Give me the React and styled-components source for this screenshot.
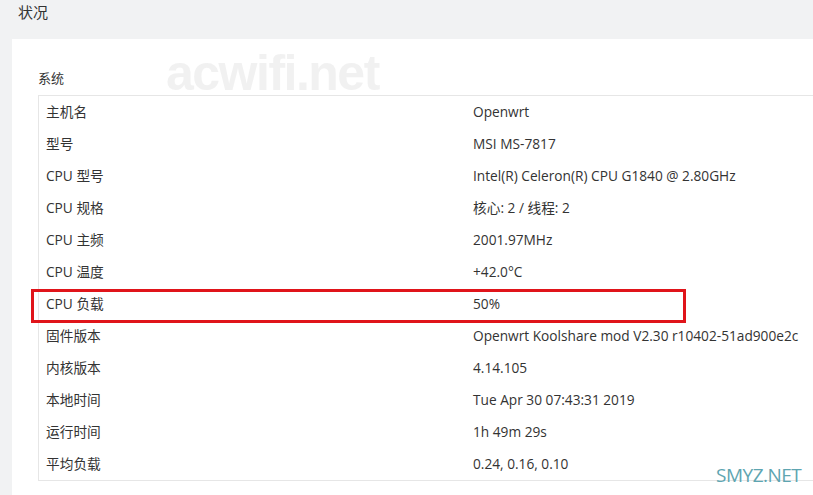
import React from 'react'
import styled, {createGlobalStyle} from 'styled-components'

const GlobalStyle = createGlobalStyle`
    html, body {
        margin: 0;
        padding: 0;
        background: #f1f2f3;
        overflow: hidden;
    }
    body {
        font-family: "Open Sans", "Noto Sans CJK SC", sans-serif;
        color: #333;
    }
`

const Page = styled.div`
    position: relative;
    width: 813px;
    height: 495px;
    overflow: hidden;
`

const Title = styled.h2`
    margin: 0;
    padding: 2px 0 0 18px;
    height: 37px;
    font-size: 15px;
    font-weight: normal;
    line-height: 20px;
    color: #333;
`

const Card = styled.div`
    margin-left: 12px;
    width: 830px;
    background: #fff;
    padding: 28px 0 16px 26px;
    box-sizing: border-box;
`

const Legend = styled.div`
    font-size: 13px;
    line-height: 22px;
    height: 28px;
    color: #333;
`

const Table = styled.div`
    border: 1px solid #e6e6e6;
    border-right: none;
`

const Row = styled.div`
    position: relative;
    display: grid;
    grid-template-columns: 434px 1fr;
    height: 32px;
    align-items: center;
    font-size: 13.7px;
    line-height: 18px;
    color: #333;
    padding-bottom: 1px;
    box-sizing: border-box;
`

const Label = styled.div`
    padding-left: 7px;
`

const Value = styled.div`
    white-space: nowrap;
`

const Highlight = styled.div`
    position: absolute;
    left: -8px;
    top: 1px;
    width: 655px;
    height: 34px;
    border: 3px solid #e0141a;
    box-sizing: border-box;
    pointer-events: none;
`

const Watermark = styled.div`
    position: absolute;
    left: 166px;
    top: 44px;
    font-family: "Liberation Sans", Arial, sans-serif;
    font-weight: bold;
    font-size: 50px;
    letter-spacing: -1.5px;
    color: rgba(200, 200, 200, 0.25);
    pointer-events: none;
`

const Stamp = styled.div`
    position: absolute;
    left: 716px;
    top: 462px;
    font-family: "Open Sans", "Noto Sans", sans-serif;
    font-size: 19px;
    letter-spacing: -0.5px;
    color: #5ea5b1;
`

const rows = [
    ['主机名', 'Openwrt'],
    ['型号', 'MSI MS-7817'],
    ['CPU 型号', 'Intel(R) Celeron(R) CPU G1840 @ 2.80GHz'],
    ['CPU 规格', '核心: 2 / 线程: 2'],
    ['CPU 主频', '2001.97MHz'],
    ['CPU 温度', '+42.0°C'],
    ['CPU 负载', '50%', true],
    ['固件版本', 'Openwrt Koolshare mod V2.30 r10402-51ad900e2c'],
    ['内核版本', '4.14.105'],
    ['本地时间', 'Tue Apr 30 07:43:31 2019'],
    ['运行时间', '1h 49m 29s'],
    ['平均负载', '0.24, 0.16, 0.10'],
]

function App() {
    return (
        <Page>
            <GlobalStyle/>
            <Title>状况</Title>
            <Card>
                <Legend>系统</Legend>
                <Table>
                    {rows.map(([label, value, marked]) =>
                        <Row key={label}>
                            <Label>{label}</Label>
                            <Value>{value}</Value>
                            {marked && <Highlight/>}
                        </Row>
                    )}
                </Table>
            </Card>
            <Watermark>acwifi.net</Watermark>
            <Stamp>SMYZ.NET</Stamp>
        </Page>
    )
}

export default App
